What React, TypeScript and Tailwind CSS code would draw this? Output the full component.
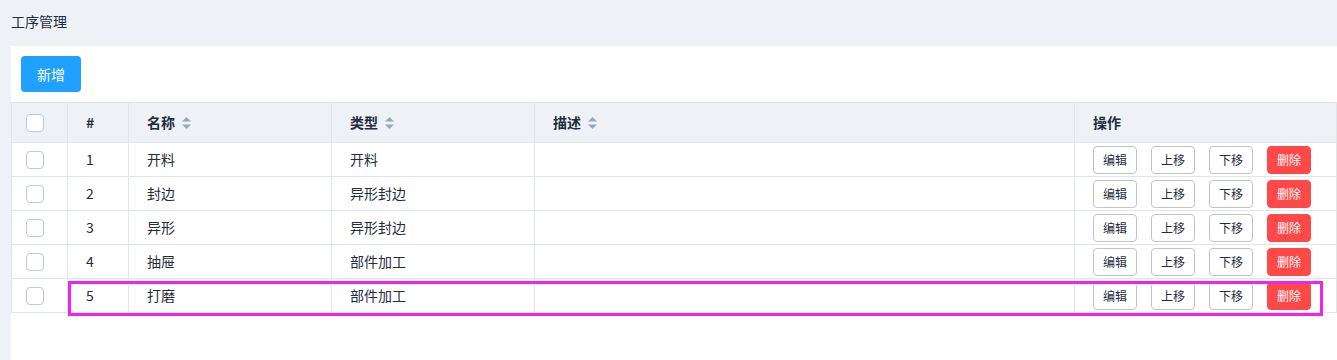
const rows = [
  { id: 1, name: '开料', type: '开料' },
  { id: 2, name: '封边', type: '异形封边' },
  { id: 3, name: '异形', type: '异形封边' },
  { id: 4, name: '抽屉', type: '部件加工' },
  { id: 5, name: '打磨', type: '部件加工' },
];

const SortIcon = () => (
  <svg width="11" height="14" viewBox="0 0 11 14" className="ml-[6px]">
    <path d="M5.5 1 L10 5.5 H1 Z" fill="#97a8be" />
    <path d="M5.5 13 L10 8.5 H1 Z" fill="#97a8be" />
  </svg>
);

const Checkbox = () => (
  <span className="block w-[18px] h-[18px] rounded-[4px] border border-[#bfcbd9] bg-white" />
);

const ActionButton = ({ label, danger }: { label: string; danger?: boolean }) => (
  <button
    className={
      danger
        ? 'w-[44px] h-[28px] rounded-[4px] bg-[#ff4949] border border-[#ff4949] text-white text-[12px] leading-none'
        : 'w-[44px] h-[28px] rounded-[4px] bg-white border border-[#c4c4c4] text-[#1f2d3d] text-[12px] leading-none'
    }
  >
    {label}
  </button>
);

export default function App() {
  return (
    <div
      className="relative w-[1337px] h-[360px] overflow-hidden bg-[#eef1f6] text-[#1f2d3d]"
      style={{ fontFamily: '"Noto Sans CJK SC", "Liberation Sans", sans-serif' }}
    >
      <div className="h-[46px] pl-[11px] pt-[11px] text-[14px] leading-[20px]">工序管理</div>

      <div className="ml-[11px] h-[314px] bg-white">
        <div className="p-[10px]">
          <button className="w-[60px] h-[36px] rounded-[4px] bg-[#20a0ff] text-white text-[14px]">新增</button>
        </div>

        <table className="w-[1326px] border-collapse table-fixed text-[14px]">
          <colgroup>
            <col className="w-[56px]" />
            <col className="w-[61px]" />
            <col className="w-[203px]" />
            <col className="w-[203px]" />
            <col className="w-[540px]" />
            <col />
          </colgroup>
          <thead>
            <tr className="h-[40px] bg-[#eef1f6] font-bold">
              <th className="border border-[#dfe6ec] pl-[14px] text-left">
                <Checkbox />
              </th>
              <th className="border border-[#dfe6ec] pl-[18px] text-left font-bold">#</th>
              <th className="border border-[#dfe6ec] pl-[18px] text-left">
                <span className="flex items-center">名称<SortIcon /></span>
              </th>
              <th className="border border-[#dfe6ec] pl-[18px] text-left">
                <span className="flex items-center">类型<SortIcon /></span>
              </th>
              <th className="border border-[#dfe6ec] pl-[18px] text-left">
                <span className="flex items-center">描述<SortIcon /></span>
              </th>
              <th className="border border-[#dfe6ec] pl-[18px] text-left">操作</th>
            </tr>
          </thead>
          <tbody>
            {rows.map((r) => (
              <tr key={r.id} className="h-[34px]">
                <td className="border border-[#dfe6ec] pl-[14px]">
                  <Checkbox />
                </td>
                <td className="border border-[#dfe6ec] pl-[18px]">{r.id}</td>
                <td className="border border-[#dfe6ec] pl-[18px]">{r.name}</td>
                <td className="border border-[#dfe6ec] pl-[18px]">{r.type}</td>
                <td className="border border-[#dfe6ec]" />
                <td className="border border-[#dfe6ec] pl-[18px]">
                  <div className="flex items-center gap-[14px]">
                    <ActionButton label="编辑" />
                    <ActionButton label="上移" />
                    <ActionButton label="下移" />
                    <ActionButton label="删除" danger />
                  </div>
                </td>
              </tr>
            ))}
          </tbody>
        </table>
      </div>

      {/* highlight annotation around the last row */}
      <div className="absolute left-[68px] top-[281px] w-[1255px] h-[35px] border-[3px] border-[#f022f0] pointer-events-none" />
    </div>
  );
}
